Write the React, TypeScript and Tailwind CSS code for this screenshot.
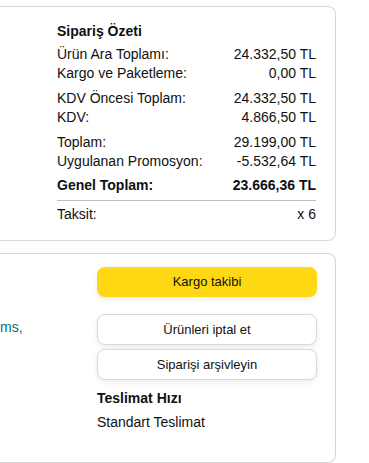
const rows: { label: string; value: string }[][] = [
  [
    { label: 'Ürün Ara Toplamı:', value: '24.332,50 TL' },
    { label: 'Kargo ve Paketleme:', value: '0,00 TL' },
  ],
  [
    { label: 'KDV Öncesi Toplam:', value: '24.332,50 TL' },
    { label: 'KDV:', value: '4.866,50 TL' },
  ],
  [
    { label: 'Toplam:', value: '29.199,00 TL' },
    { label: 'Uygulanan Promosyon:', value: '-5.532,64 TL' },
  ],
];

export default function App() {
  return (
    <div
      className="min-h-screen bg-white pt-[6px] text-[#0f1111] text-[14px]"
      style={{ fontFamily: '"Liberation Sans", Arial, sans-serif' }}
    >
      {/* Order summary */}
      <div className="w-[336px] h-[235px] border-y border-r border-[#d5d9d9] rounded-r-[8px] pl-[57px] pr-[19px] pt-[15px]">
        <h3 className="font-bold leading-[19px] mb-[4px]">Sipariş Özeti</h3>
        {rows.map((group, gi) => (
          <div key={gi} className="mb-[6px]">
            {group.map((r) => (
              <div key={r.label} className="flex justify-between leading-[19px]">
                <span>{r.label}</span>
                <span>{r.value}</span>
              </div>
            ))}
          </div>
        ))}
        <div className="flex justify-between leading-[19px] font-bold -mt-[1px]">
          <span>Genel Toplam:</span>
          <span>23.666,36 TL</span>
        </div>
        <div className="border-t border-[#bbbfbf] mt-[5px] pt-[4px] flex justify-between leading-[19px]">
          <span>Taksit:</span>
          <span>x 6</span>
        </div>
      </div>

      {/* Actions */}
      <div className="mt-[12px] w-[336px] h-[210px] border-y border-r border-[#d5d9d9] rounded-r-[8px] flex pt-[13px] pr-[18px]">
        <div className="flex-1 pt-[50px]">
          <span className="text-[#007185] leading-[19px]">ms,</span>
        </div>
        <div className="w-[220px] flex flex-col">
          <button className="h-[30px] rounded-[8px] bg-[#ffd814] text-[13px] shadow-[0_2px_5px_rgba(213,217,217,0.5)]">
            Kargo takibi
          </button>
          <button className="mt-[17px] h-[31px] rounded-[8px] bg-white border border-[#d5d9d9] text-[13px] shadow-[0_2px_5px_rgba(213,217,217,0.5)]">
            Ürünleri iptal et
          </button>
          <button className="mt-[4px] h-[31px] rounded-[8px] bg-white border border-[#d5d9d9] text-[13px] shadow-[0_2px_5px_rgba(213,217,217,0.5)]">
            Siparişi arşivleyin
          </button>
          <div className="mt-[9px] font-bold leading-[19px]">Teslimat Hızı</div>
          <div className="mt-[5px] leading-[19px]">Standart Teslimat</div>
        </div>
      </div>
    </div>
  );
}
